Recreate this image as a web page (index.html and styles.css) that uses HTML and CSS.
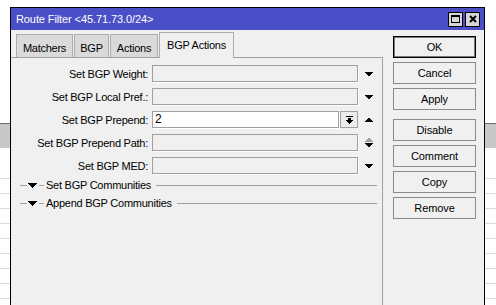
FILE: index.html
```html
<!DOCTYPE html>
<html>
<head>
<meta charset="utf-8">
<title>Route Filter</title>
<link rel="stylesheet" href="styles.css">
</head>
<body>
<div class="backdrop">
  <div class="bd-header"></div>
  <div class="bd-gap"></div>
  <div class="bd-row"></div>
  <div class="bd-row"></div>
  <div class="bd-row"></div>
  <div class="bd-row"></div>
  <div class="bd-row"></div>
  <div class="bd-row"></div>
  <div class="bd-row"></div>
  <div class="bd-row"></div>
  <div class="bd-row"></div>
</div>

<div class="window">
  <div class="titlebar">
    <span class="title">Route Filter &lt;45.71.73.0/24&gt;</span>
    <div class="tb-btns">
      <span class="tb-btn"><svg width="9" height="8" viewBox="0 0 9 8"><path d="M0 0H9V8H0Z M1 2V7H8V2Z" fill="#000" fill-rule="evenodd"/></svg></span>
      <span class="tb-btn"><svg width="8" height="8" viewBox="0 0 8 8"><path d="M1 1L7 7M7 1L1 7" stroke="#000" stroke-width="2"/></svg></span>
    </div>
  </div>
  <div class="main">
    <div class="left">
      <div class="tabs">
        <div class="tab tab-matchers">Matchers</div>
        <div class="tab tab-bgp">BGP</div>
        <div class="tab tab-actions">Actions</div>
        <div class="tab tab-active tab-bgpactions">BGP Actions</div>
      </div>
      <div class="pane">
        <div class="row">
          <label class="label">Set BGP Weight:</label>
          <div class="field"></div>
          <div class="arrow"><svg width="8" height="4" viewBox="0 0 8 4"><path d="M0 0H8V1H7V2H6V3H5V4H3V3H2V2H1V1H0Z" fill="#000"/></svg></div>
        </div>
        <div class="row">
          <label class="label">Set BGP Local Pref.:</label>
          <div class="field"></div>
          <div class="arrow"><svg width="8" height="4" viewBox="0 0 8 4"><path d="M0 0H8V1H7V2H6V3H5V4H3V3H2V2H1V1H0Z" fill="#000"/></svg></div>
        </div>
        <div class="row">
          <label class="label">Set BGP Prepend:</label>
          <div class="field field-short field-active">2</div>
          <div class="spin-btn"><svg width="7" height="8" viewBox="0 0 7 8"><path d="M0 0H7V1H0Z M2 2H5V4H2Z M0 4H7V5H6V6H5V7H4V8H3V7H2V6H1V5H0Z" fill="#000"/></svg></div>
          <div class="arrow"><svg width="8" height="4" viewBox="0 0 8 4"><path d="M0 4H8V3H7V2H6V1H5V0H3V1H2V2H1V3H0Z" fill="#000"/></svg></div>
        </div>
        <div class="row">
          <label class="label">Set BGP Prepend Path:</label>
          <div class="field"></div>
          <div class="arrow arrow-stack">
            <svg width="8" height="4" viewBox="0 0 8 4"><path d="M0 4H8V3H7V2H6V1H5V0H3V1H2V2H1V3H0Z" fill="#a0a0a0"/></svg>
            <svg width="8" height="4" viewBox="0 0 8 4"><path d="M0 0H8V1H7V2H6V3H5V4H3V3H2V2H1V1H0Z" fill="#000"/></svg>
          </div>
        </div>
        <div class="row">
          <label class="label">Set BGP MED:</label>
          <div class="field"></div>
          <div class="arrow"><svg width="8" height="4" viewBox="0 0 8 4"><path d="M0 0H8V1H7V2H6V3H5V4H3V3H2V2H1V1H0Z" fill="#000"/></svg></div>
        </div>
        <div class="sep">
          <span class="sep-lead"></span>
          <svg class="sep-tri" width="9" height="5" viewBox="0 0 9 5"><path d="M0 0H9V1H8V2H7V3H6V4H5V5H4V4H3V3H2V2H1V1H0Z" fill="#000"/></svg>
          <span class="sep-dash"></span>
          <span class="sep-text">Set BGP Communities</span>
          <span class="sep-line"></span>
        </div>
        <div class="sep">
          <span class="sep-lead"></span>
          <svg class="sep-tri" width="9" height="5" viewBox="0 0 9 5"><path d="M0 0H9V1H8V2H7V3H6V4H5V5H4V4H3V3H2V2H1V1H0Z" fill="#000"/></svg>
          <span class="sep-dash"></span>
          <span class="sep-text">Append BGP Communities</span>
          <span class="sep-line"></span>
        </div>
      </div>
    </div>
    <div class="right">
      <button class="btn btn-default">OK</button>
      <button class="btn">Cancel</button>
      <button class="btn">Apply</button>
      <button class="btn btn-gap">Disable</button>
      <button class="btn">Comment</button>
      <button class="btn">Copy</button>
      <button class="btn">Remove</button>
    </div>
  </div>
</div>
</body>
</html>
```

FILE: styles.css
```css
* { box-sizing: border-box; }

body {
  margin: 0;
  width: 496px;
  height: 305px;
  overflow: hidden;
  position: relative;
  background: #fff;
  font-family: "Liberation Sans", Arial, sans-serif;
  font-size: 11px;
  letter-spacing: -0.25px;
  color: #000;
}

/* background table behind the window */
.backdrop { padding-top: 123px; }
.bd-header { height: 25px; border-top: 1px solid #6e6e6e; background: #c8c8c8; }
.bd-gap { height: 16px; }
.bd-row { height: 15px; border-bottom: 1px solid #dcdcdc; }

/* window */
.window {
  position: absolute;
  left: 10px;
  top: 7px;
  width: 475px;
  height: 300px;
  border: 1px solid #000;
  border-bottom: none;
  background: #f0f0f0;
  display: flex;
  flex-direction: column;
}

.titlebar {
  height: 22px;
  flex: none;
  background: #4b4fc7;
  color: #fff;
  display: flex;
  align-items: center;
  justify-content: space-between;
  padding: 0 4px 0 5px;
}
.title { font-size: 11px; line-height: 22px; letter-spacing: -0.1px; }
.tb-btns { display: flex; gap: 2px; }
.tb-btn {
  width: 15px;
  height: 15px;
  border: 1px solid #000;
  background: #d6d6d6;
  display: flex;
  align-items: center;
  justify-content: center;
}

.main { flex: 1; display: flex; }

.left { width: 372px; flex: none; display: flex; flex-direction: column; }

.tabs {
  height: 27px;
  flex: none;
  display: flex;
  align-items: flex-end;
  padding-left: 5px;
  gap: 1px;
}
.tab {
  height: 23px;
  background: #dadada;
  border: 1px solid #adadad;
  border-bottom: none;
  text-align: center;
  line-height: 22px;
  padding-top: 2px;
}
.tab-matchers { width: 57px; }
.tab-bgp { width: 35px; }
.tab-actions { width: 48px; }
.tab-bgpactions { width: 75px; }
.tab-active {
  height: 26px;
  margin-bottom: -1px;
  background: #f0f0f0;
  position: relative;
  z-index: 1;
  padding-top: 1px;
}

.pane {
  flex: 1;
  border-top: 1px solid #a0a0a0;
  border-right: 1px solid #a0a0a0;
  padding-top: 7px;
}

.row {
  display: flex;
  align-items: center;
  height: 17px;
  margin-bottom: 6px;
}
.label { width: 137px; text-align: right; margin-right: 4px; white-space: nowrap; }
.field {
  width: 206px;
  height: 17px;
  border: 1px solid #a0a0a0;
  box-shadow: 1px 1px 0 #fff;
  background: #f0f0f0;
}
.field-short { width: 187px; margin-right: 1px; }
.field-active { background: #fff; padding-left: 2px; line-height: 15px; font-size: 12px; }
.spin-btn {
  width: 18px;
  height: 17px;
  border: 1px solid #a0a0a0;
  background: #ebebeb;
  display: flex;
  align-items: center;
  justify-content: center;
}
.arrow {
  width: 18px;
  margin-left: 2px;
  display: flex;
  flex-direction: column;
  align-items: center;
  justify-content: center;
}
.arrow-stack { gap: 1px; }
.arrow svg { display: block; }

.sep {
  display: flex;
  align-items: center;
  height: 10px;
  margin-bottom: 8px;
  padding-left: 9px;
  padding-right: 5px;
}
.sep-lead { width: 7px; height: 1px; background: #a0a0a0; }
.sep-tri { margin-left: 1px; }
.sep-dash { width: 5px; height: 1px; background: #a0a0a0; margin-left: 2px; }
.sep-text { margin-left: 2px; white-space: nowrap; }
.sep-line { flex: 1; height: 1px; background: #a0a0a0; margin-left: 5px; }

.right {
  flex: 1;
  padding: 6px 0 0 10px;
  display: flex;
  flex-direction: column;
}
.btn {
  width: 83px;
  height: 22px;
  margin-bottom: 4px;
  border: 1px solid #8a8a8a;
  background: #f0f0f0;
  font-family: "Liberation Sans", Arial, sans-serif;
  font-size: 11px;
  letter-spacing: -0.1px;
  color: #000;
  padding: 0;
}
.btn-default { border-color: #000; box-shadow: inset 0 0 0 1px #7a7a7a; }
.btn-gap { margin-top: 5px; }
```
